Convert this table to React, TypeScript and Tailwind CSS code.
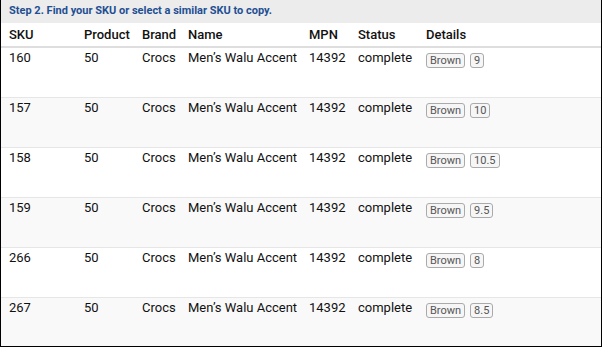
import React from "react";

type Row = { sku: string; size: string };

const rows: Row[] = [
  { sku: "160", size: "9" },
  { sku: "157", size: "10" },
  { sku: "158", size: "10.5" },
  { sku: "159", size: "9.5" },
  { sku: "266", size: "8" },
  { sku: "267", size: "8.5" },
];

function Badge({ children }: { children: React.ReactNode }) {
  return (
    <span className="inline-block rounded-[3px] border border-[#aaaaaa] bg-[#f6f6f6] px-[3px] text-[11px] leading-[13px] text-[#555]">
      {children}
    </span>
  );
}

export default function App() {
  return (
    <div
      className="h-[347px] w-[602px] overflow-hidden border-x border-b border-black bg-white text-[#111]"
      style={{ fontFamily: "Roboto, 'Liberation Sans', sans-serif" }}
    >
      <div className="flex h-[23px] items-center bg-[#ececec] pl-[8px] text-[11px] font-bold text-[#1f4f93]">
        Step 2. Find your SKU or select a similar SKU to copy.
      </div>
      <table className="w-full table-fixed border-collapse text-[13px]">
        <colgroup>
          <col className="w-[75px]" />
          <col className="w-[58px]" />
          <col className="w-[46px]" />
          <col className="w-[121px]" />
          <col className="w-[49px]" />
          <col className="w-[68px]" />
          <col />
        </colgroup>
        <thead>
          <tr className="h-[24px] border-b-2 border-[#dedede] text-left">
            <th className="pl-[8px] font-medium">SKU</th>
            <th className="pl-[8px] font-medium">Product</th>
            <th className="pl-[8px] font-medium">Brand</th>
            <th className="pl-[8px] font-medium">Name</th>
            <th className="pl-[8px] font-medium">MPN</th>
            <th className="pl-[8px] font-medium">Status</th>
            <th className="pl-[8px] font-medium">Details</th>
          </tr>
        </thead>
        <tbody>
          {rows.map((r, i) => (
            <tr
              key={r.sku}
              className={`h-[50px] border-t border-[#e6e6e6] align-top ${i % 2 === 1 ? "bg-[#f9f9f9]" : "bg-white"}`}
            >
              <td className="pl-[8px] pt-0">{r.sku}</td>
              <td className="pl-[8px] pt-0">50</td>
              <td className="pl-[8px] pt-0">Crocs</td>
              <td className="pl-[8px] pt-0">Men’s Walu Accent</td>
              <td className="pl-[8px] pt-0">14392</td>
              <td className="pl-[8px] pt-0">complete</td>
              <td className="pl-[8px] pt-[5px]">
                <div className="flex gap-[5px]">
                  <Badge>Brown</Badge>
                  <Badge>{r.size}</Badge>
                </div>
              </td>
            </tr>
          ))}
        </tbody>
      </table>
    </div>
  );
}
